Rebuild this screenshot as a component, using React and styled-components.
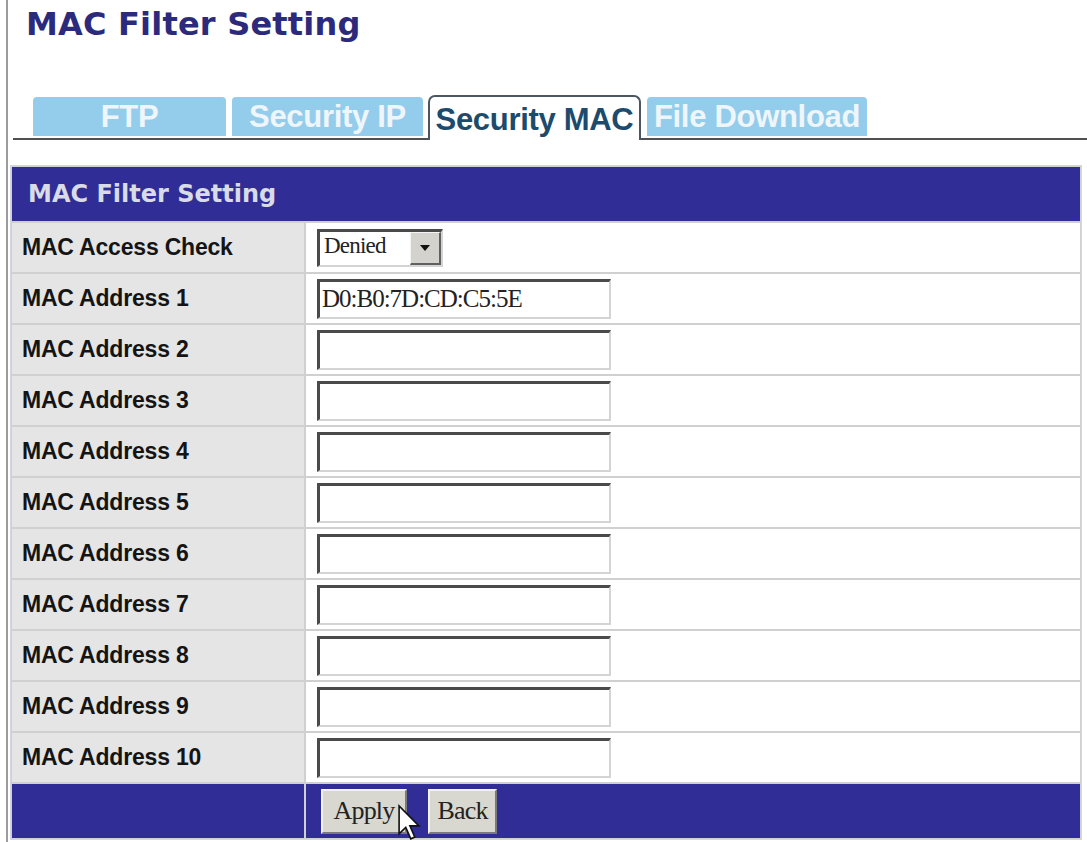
import React from "react";
import styled, { createGlobalStyle } from "styled-components";

const Global = createGlobalStyle`
  html, body { margin: 0; padding: 0; background: #ffffff; }
  body { font-family: "Liberation Sans", Arial, sans-serif; overflow: hidden; }
`;

const Frame = styled.div`
  margin-left: 6px;
  border-left: 2px solid #9c9c9c;
  min-height: 842px;
  box-sizing: border-box;
  padding-top: 6px;
`;

const Title = styled.h1`
  margin: 0;
  padding-left: 18px;
  font-family: "DejaVu Sans", Verdana, sans-serif;
  font-weight: bold;
  font-size: 32px;
  line-height: 37px;
  color: #2c2a7c;
  letter-spacing: 0.2px;
`;

const TabBar = styled.div`
  margin-top: 52px;
  margin-left: 5px;
  padding-left: 20px;
  display: flex;
  align-items: flex-end;
  border-bottom: 2px solid #505050;
  height: 43px;
`;

const Tab = styled.div`
  box-sizing: border-box;
  width: ${(p) => p.$w}px;
  margin-right: ${(p) => p.$gap}px;
  display: flex;
  align-items: center;
  justify-content: center;
  font-family: "Liberation Sans", Arial, sans-serif;
  font-weight: bold;
  font-size: 31px;
  letter-spacing: -0.3px;
  white-space: nowrap;
  ${(p) =>
    p.$active
      ? `
    height: 45px;
    margin-bottom: -2px;
    background: #ffffff;
    border: 2px solid #4a5660;
    border-bottom: none;
    border-radius: 7px 7px 0 0;
    color: #1d4b6d;
    padding-top: 2px;
  `
      : `
    height: 39px;
    margin-bottom: 2px;
    background: #94cdeb;
    border-radius: 4px 4px 0 0;
    color: #eef6fb;
  `}
`;

const Table = styled.div`
  margin-top: 25px;
  margin-left: 2px;
  width: 1072px;
  box-sizing: border-box;
  border: 1px solid #d6d6e0;
  padding: 1px;
  background: #d0d0d0;
  display: grid;
  grid-template-columns: 292px 1fr;
  gap: 2px;
`;

const Header = styled.div`
  grid-column: 1 / span 2;
  height: 54px;
  background: #302e96;
  color: #d9dce6;
  font-family: "DejaVu Sans", Verdana, sans-serif;
  font-weight: bold;
  font-size: 24px;
  display: flex;
  align-items: center;
  padding-left: 16px;
`;

const Label = styled.div`
  height: 49px;
  background: #e5e5e5;
  display: flex;
  align-items: center;
  padding-left: 10px;
  font-family: "Liberation Sans", Arial, sans-serif;
  font-weight: bold;
  font-size: 23px;
  color: #141414;
  letter-spacing: -0.2px;
`;

const Value = styled.div`
  height: 49px;
  background: #ffffff;
  display: flex;
  align-items: center;
  padding-left: 11px;
`;

const TextBox = styled.input`
  box-sizing: border-box;
  width: 294px;
  height: 40px;
  margin: 0;
  padding: 0 0 0 2px;
  background: #ffffff;
  border-top: 3px solid #4a4a4a;
  border-left: 3px solid #4a4a4a;
  border-right: 2px solid #d4d4d4;
  border-bottom: 2px solid #d4d4d4;
  font-family: "Liberation Serif", "Times New Roman", serif;
  font-size: 25px;
  letter-spacing: -1px;
  color: #222;
  outline: none;
`;

const SelectBox = styled.div`
  box-sizing: border-box;
  width: 126px;
  height: 38px;
  display: flex;
  align-items: stretch;
  border-top: 3px solid #4a4a4a;
  border-left: 3px solid #4a4a4a;
  border-right: 2px solid #d4d4d4;
  border-bottom: 2px solid #d4d4d4;
  background: #ffffff;
`;

const SelectText = styled.span`
  flex: 1;
  display: flex;
  align-items: center;
  padding-left: 4px;
  font-family: "Liberation Serif", "Times New Roman", serif;
  font-size: 23px;
  letter-spacing: -0.8px;
  color: #222;
  padding-bottom: 4px;
`;

const SelectArrow = styled.span`
  width: 28px;
  background: #d4d2cc;
  border-left: 1px solid #f4f4f4;
  border-top: 1px solid #f4f4f4;
  border-right: 2px solid #606060;
  border-bottom: 2px solid #606060;
  display: flex;
  align-items: center;
  justify-content: center;
  &::after {
    content: "";
    border-left: 5px solid transparent;
    border-right: 5px solid transparent;
    border-top: 6px solid #111;
  }
`;

const FooterCell = styled.div`
  height: 54px;
  background: #302e96;
  display: flex;
  align-items: center;
  gap: 21px;
  padding-left: 15px;
  position: relative;
`;

const Button = styled.button`
  box-sizing: border-box;
  width: ${(p) => p.$w}px;
  height: 45px;
  margin: 0;
  padding: 0;
  background: #d8d7d0;
  border-top: 2px solid #f2f2f2;
  border-left: 2px solid #f2f2f2;
  border-right: 2px solid #7a7a7a;
  border-bottom: 2px solid #7a7a7a;
  font-family: "Liberation Serif", "Times New Roman", serif;
  font-size: 26px;
  letter-spacing: -0.8px;
  color: #222;
`;

const Cursor = styled.svg`
  position: absolute;
  left: 92px;
  top: 21px;
  width: 22px;
  height: 36px;
  overflow: visible;
`;

const addresses = [
  "D0:B0:7D:CD:C5:5E",
  "",
  "",
  "",
  "",
  "",
  "",
  "",
  "",
  "",
];

export default function App() {
  return (
    <>
      <Global />
      <Frame>
        <Title>MAC Filter Setting</Title>
        <TabBar>
          <Tab $w={193} $gap={6}>FTP</Tab>
          <Tab $w={191} $gap={5}>Security IP</Tab>
          <Tab $w={213} $gap={6} $active>Security MAC</Tab>
          <Tab $w={220} $gap={0}>File Download</Tab>
        </TabBar>
        <Table>
          <Header>MAC Filter Setting</Header>
          <Label>MAC Access Check</Label>
          <Value>
            <SelectBox>
              <SelectText>Denied</SelectText>
              <SelectArrow />
            </SelectBox>
          </Value>
          {addresses.map((a, i) => (
            <React.Fragment key={i}>
              <Label>MAC Address {i + 1}</Label>
              <Value>
                <TextBox readOnly defaultValue={a} />
              </Value>
            </React.Fragment>
          ))}
          <FooterCell />
          <FooterCell>
            <Button $w={86}>Apply</Button>
            <Button $w={69}>Back</Button>
            <Cursor viewBox="0 0 12 20">
              <path
                d="M0.5 0.5 L0.5 16 L4.2 12.4 L7 18.8 L9.2 17.8 L6.5 11.6 L11.5 11.6 Z"
                fill="#ffffff"
                stroke="#111"
                strokeWidth="0.9"
                strokeLinejoin="miter"
              />
            </Cursor>
          </FooterCell>
        </Table>
      </Frame>
    </>
  );
}
